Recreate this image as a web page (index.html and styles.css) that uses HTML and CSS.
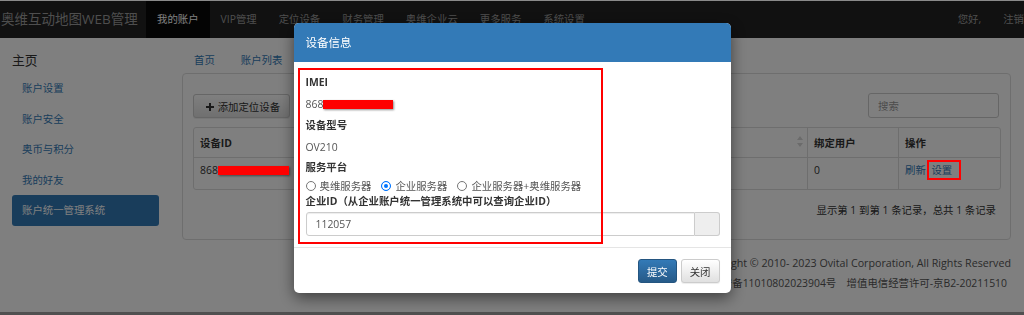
FILE: index.html
```html
<!DOCTYPE html>
<html lang="zh-CN">
<head>
    <meta charset="UTF-8">
    <meta name="viewport" content="width=device-width, initial-scale=1.0">
    <title>奥维互动地图WEB管理</title>
    <link rel="stylesheet" href="styles.css">
</head>
<body>

    <div class="navbar">
        <div class="brand">奥维互动地图WEB管理</div>
        <ul class="nav-menu">
            <li class="active">我的账户</li>
            <li>VIP管理</li>
            <li>定位设备</li>
            <li>财务管理</li>
            <li>奥维企业云</li>
            <li>更多服务</li>
            <li>系统设置</li>
        </ul>
        <ul class="nav-menu nav-right">
            <li>您好,</li>
            <li>注销</li>
        </ul>
    </div>

    <div class="main">
        <!-- 左侧菜单 -->
        <div class="sidebar">
            <div class="side-title">主页</div>
            <ul class="side-menu">
                <li><a>账户设置</a></li>
                <li><a>账户安全</a></li>
                <li><a>奥币与积分</a></li>
                <li><a>我的好友</a></li>
                <li class="active"><a>账户统一管理系统</a></li>
            </ul>
        </div>

        <div class="content">
            <div class="breadcrumb">
                <a>首页</a>
                <a>账户列表</a>
            </div>

            <div class="panel">
                <div class="toolbar">
                    <button class="btn btn-default">
                        <svg class="plus-icon" width="8" height="8" viewBox="0 0 8 8"><path d="M3 0h2v3h3v2H5v3H3V5H0V3h3z" fill="#333"/></svg>
                        添加定位设备
                    </button>
                    <input type="text" class="search" placeholder="搜索">
                </div>

                <table class="device-table">
                    <colgroup>
                        <col class="col-id">
                        <col class="col-name">
                        <col class="col-time">
                        <col class="col-user">
                        <col class="col-op">
                    </colgroup>
                    <thead>
                        <tr>
                            <th>设备ID</th>
                            <th>设备名称</th>
                            <th>到期时间<svg class="sort-icon" width="6" height="11" viewBox="0 0 6 11"><path d="M3 0L6 4H0z M0 7H6L3 11z" fill="#d6d6d6"/></svg></th>
                            <th>绑定用户</th>
                            <th>操作</th>
                        </tr>
                    </thead>
                    <tbody>
                        <tr>
                            <td>868<span class="redact redact-table"></span></td>
                            <td>OV210</td>
                            <td>2024-06-30</td>
                            <td>0</td>
                            <td><a>刷新</a> <span class="mark-box"><a>设置</a></span></td>
                        </tr>
                    </tbody>
                </table>

                <div class="page-info">显示第 1 到第 1 条记录，总共 1 条记录</div>
            </div>

            <div class="footer">
                <div class="footer-line">Copyright © 2010- 2023 Ovital Corporation, All Rights Reserved</div>
                <div class="footer-line footer-icp">京公网安备11010802023904号　增值电信经营许可-京B2-20211510</div>
            </div>
        </div>
    </div>

    <!-- 弹窗背景 -->
    <div class="modal-backdrop"></div>

    <!-- 设备信息弹窗 -->
    <div class="modal">
        <div class="modal-dialog">
            <div class="modal-header">设备信息</div>
            <div class="modal-body">
                <div class="note-box"></div>
                <div class="field-label row-imei">IMEI</div>
                <div class="field-value row-868">868<span class="redact redact-modal"></span></div>
                <div class="field-label row-model">设备型号</div>
                <div class="field-value row-ov">OV210</div>
                <div class="field-label row-platform">服务平台</div>
                <div class="radios">
                    <label class="radio-item"><input type="radio" name="server">奥维服务器</label>
                    <label class="radio-item"><input type="radio" name="server" checked>企业服务器</label>
                    <label class="radio-item"><input type="radio" name="server">企业服务器+奥维服务器</label>
                </div>
                <div class="field-label row-company">企业ID（从企业账户统一管理系统中可以查询企业ID）</div>
                <div class="input-group">
                    <input type="text" class="form-control" value="112057">
                    <span class="input-addon"></span>
                </div>
            </div>
            <div class="modal-footer">
                <button class="btn btn-primary">提交</button>
                <button class="btn btn-default">关闭</button>
            </div>
        </div>
    </div>

</body>
</html>
```

FILE: styles.css
```css
html, body {
    margin: 0;
    height: 315px;
    overflow: hidden;
}
body {
    font-family: "Open Sans", "Noto Sans CJK SC", sans-serif;
    font-size: 10.4px;
    color: #333;
    background: #fff;
}
a {
    color: #337ab7;
    cursor: pointer;
}
ul {
    list-style: none;
    margin: 0;
    padding: 0;
}

/* 顶部导航 */
.navbar {
    display: flex;
    height: 38px;
    background-color: #222;
}
.brand {
    flex-shrink: 0;
    width: 145px;
    padding-left: 1px;
    font-size: 13.5px;
    line-height: 38px;
    color: #9d9d9d;
    white-space: nowrap;
}
.nav-menu {
    display: flex;
}
.nav-menu li {
    padding: 0 11px;
    line-height: 38px;
    color: #9d9d9d;
    white-space: nowrap;
}
.nav-menu li.active {
    background-color: #080808;
    color: #fff;
}
.nav-right {
    margin-left: auto;
}
.nav-right li:last-child {
    padding-right: 0;
}

.main {
    display: flex;
}

/* 左侧菜单 */
.sidebar {
    flex-shrink: 0;
    width: 147px;
    padding-left: 12px;
    margin-right: 23px;
}
.side-title {
    font-size: 12.8px;
    line-height: 20px;
    padding-top: 12px;
    margin-bottom: 3px;
}
.side-menu li a {
    display: block;
    padding: 0 10px;
    line-height: 30.5px;
    border-radius: 3px;
}
.side-menu li.active a {
    background-color: #337ab7;
    color: #fff;
}

.content {
    flex: 1;
    min-width: 0;
    margin-right: 13px;
}
.breadcrumb {
    display: flex;
    gap: 26px;
    height: 23px;
    padding: 12px 0 0 12px;
    line-height: 20px;
}

.panel {
    box-sizing: border-box;
    height: 167px;
    border: 1px solid #ddd;
    border-radius: 4px;
    padding: 20px 11px 0 10px;
}
.toolbar {
    display: flex;
    justify-content: space-between;
    align-items: flex-start;
    height: 25px;
    margin-bottom: 8px;
}
.btn {
    height: 24px;
    padding: 0 8px;
    font-family: inherit;
    font-size: 10.4px;
    border-radius: 3px;
    cursor: pointer;
    white-space: nowrap;
}
.btn-default {
    color: #333;
    background-image: linear-gradient(#fff, #e0e0e0);
    border: 1px solid #ccc;
    box-shadow: inset 0 1px 0 rgba(255, 255, 255, .15), 0 1px 1px rgba(0, 0, 0, .075);
}
.btn-primary {
    color: #fff;
    background-image: linear-gradient(#337ab7, #265a88);
    border: 1px solid #245580;
}
.toolbar .btn {
    padding: 0 9px 0 12px;
}
.plus-icon {
    margin-right: 1px;
}
.search {
    box-sizing: border-box;
    width: 131px;
    height: 25px;
    margin-top: -1px;
    padding: 0 9px;
    font-family: inherit;
    font-size: 10.4px;
    border: 1px solid #ccc;
    border-radius: 3px;
}
.search::placeholder {
    color: #999;
}

/* 设备列表 */
.device-table {
    width: 100%;
    table-layout: fixed;
    border-collapse: separate;
    border-spacing: 0;
    border: 1px solid #ddd;
    border-radius: 3px;
}
.col-id { width: 207px; }
.col-name { width: 160px; }
.col-time { width: 246px; }
.col-user { width: 91px; }
.col-op { width: 102px; }
.device-table th {
    height: 29px;
    padding: 0 6px;
    text-align: left;
    font-weight: bold;
    border-bottom: 1px solid #ddd;
}
.device-table td {
    box-sizing: border-box;
    height: 31px;
    padding: 3px 6px 0;
    line-height: 18px;
    vertical-align: top;
}
.device-table th + th,
.device-table td + td {
    border-left: 1px solid #ddd;
}
.sort-icon {
    float: right;
    margin: 1px -2px 0 0;
}
.page-info {
    margin-top: 10px;
    padding-right: 3px;
    line-height: 20px;
    text-align: right;
}

/* 标注 */
.redact {
    display: inline-block;
    width: 70px;
    height: 9px;
    background-color: #f00;
    box-shadow: 1px 1px 2px rgba(0, 0, 0, .45);
}
.redact-table {
    position: relative;
    z-index: 1100;
    width: 71px;
    vertical-align: -1px;
}
.redact-modal {
    vertical-align: -1px;
}
.mark-box {
    position: relative;
    margin-left: 3px;
}
.mark-box::after {
    content: "";
    position: absolute;
    left: -4px;
    right: -9px;
    top: -3px;
    bottom: -3px;
    border: 2px solid #f00;
    z-index: 1100;
}

.footer {
    margin-top: 13px;
    color: #555;
    line-height: 20px;
    text-align: right;
    white-space: nowrap;
}
.footer-line {
    font-size: 10.7px;
}
.footer-icp {
    padding-right: 4px;
    font-size: 10.4px;
}

/* 弹窗 */
.modal-backdrop {
    position: fixed;
    top: 0;
    left: 0;
    right: 0;
    bottom: 0;
    z-index: 1040;
    background-color: rgba(0, 0, 0, .5);
    border-top: 1px solid #8a8a8a;
    border-bottom: 3px solid #505050;
}
.modal {
    position: fixed;
    top: 0;
    left: 0;
    right: 0;
    z-index: 1050;
}
.modal-dialog {
    width: 437px;
    margin: 23px auto 0;
    background-color: #fff;
    border-radius: 5px;
    overflow: hidden;
    box-shadow: 0 5px 15px rgba(0, 0, 0, .5);
}
.modal-header {
    height: 39px;
    padding-left: 12px;
    line-height: 39px;
    font-size: 11.5px;
    color: #fff;
    background-color: #337ab7;
}
.modal-body {
    position: relative;
    padding: 10px 11px 11px 12px;
}
.note-box {
    position: absolute;
    left: 4px;
    top: 6px;
    width: 301px;
    height: 172px;
    border: 2px solid #f00;
}
.field-label {
    font-weight: bold;
}
.field-value {
    color: #555;
}
.row-imei, .row-model { line-height: 21px; }
.row-868, .row-ov { line-height: 22px; }
.row-platform { line-height: 19px; }
.row-company { line-height: 15px; }
.radios {
    display: flex;
    height: 17px;
    align-items: center;
    color: #555;
}
.radio-item {
    display: inline-flex;
    align-items: center;
    gap: 4px;
    margin-right: 10px;
}
.radio-item input {
    appearance: none;
    box-sizing: border-box;
    width: 10px;
    height: 10px;
    margin: 0;
    border: 1px solid #767676;
    border-radius: 50%;
    background: #fff;
}
.radio-item input:checked {
    border-color: #0075ff;
    background: #0075ff;
    box-shadow: inset 0 0 0 2px #fff;
}
.input-group {
    display: flex;
    height: 24px;
    margin-top: 3px;
}
.form-control {
    flex: 1;
    box-sizing: border-box;
    height: 24px;
    padding: 0 9px;
    font-family: inherit;
    font-size: 10.4px;
    color: #555;
    border: 1px solid #ccc;
    border-radius: 3px 0 0 3px;
    box-shadow: inset 0 1px 1px rgba(0, 0, 0, .075);
}
.input-addon {
    box-sizing: border-box;
    width: 25px;
    background-color: #eee;
    border: 1px solid #ccc;
    border-left: none;
    border-radius: 0 3px 3px 0;
}
.modal-footer {
    display: flex;
    justify-content: flex-end;
    gap: 4px;
    padding: 11px 11px 10px;
    border-top: 1px solid #e5e5e5;
}
```
